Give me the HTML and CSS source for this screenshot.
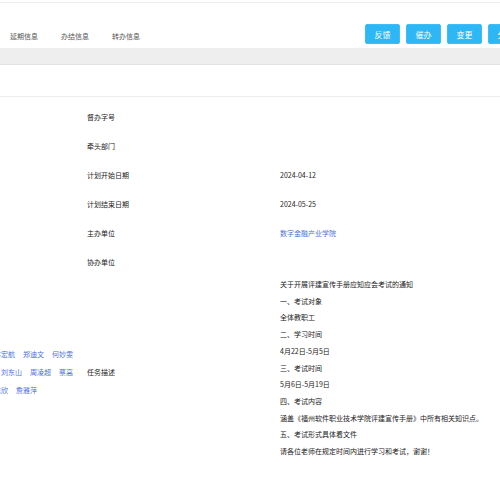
FILE: index.html
```html
<!DOCTYPE html>
<html lang="zh-CN">
<head>
    <meta charset="UTF-8">
    <meta name="viewport" content="width=device-width, initial-scale=1.0">
    <title>督办详情</title>
    <link rel="stylesheet" href="styles.css">
</head>
<body>

    <div class="topbar"></div>

    <!-- 标签与操作按钮 -->
    <div class="toolbar">
        <div class="tabs">
            <span class="tab">延期信息</span>
            <span class="tab">办结信息</span>
            <span class="tab">转办信息</span>
        </div>
        <div class="actions">
            <button type="button" class="btn">反馈</button>
            <button type="button" class="btn">催办</button>
            <button type="button" class="btn">变更</button>
            <button type="button" class="btn">分派</button>
        </div>
    </div>

    <div class="band"></div>
    <div class="spacer"></div>

    <!-- 详情表格 -->
    <div class="detail">
        <div class="cell"></div>
        <div class="cell label">督办字号</div>
        <div class="cell"></div>

        <div class="cell"></div>
        <div class="cell label">牵头部门</div>
        <div class="cell"></div>

        <div class="cell"></div>
        <div class="cell label">计划开始日期</div>
        <div class="cell">2024-04-12</div>

        <div class="cell"></div>
        <div class="cell label">计划结束日期</div>
        <div class="cell">2024-05-25</div>

        <div class="cell"></div>
        <div class="cell label">主办单位</div>
        <div class="cell link">数字金融产业学院</div>

        <div class="cell"></div>
        <div class="cell label">协办单位</div>
        <div class="cell"></div>

        <div class="cell names">
            <span>陈志强</span><span>林宏航</span><span>郑迪文</span><span>何妙雯</span>
            <span>欧阳明华</span><span>刘东山</span><span>周凌超</span><span>蔡高</span>
            <span>黄丽娟</span><span>陈欣</span><span>詹雅萍</span>
        </div>
        <div class="cell label">任务描述</div>
        <div class="cell desc">
            <p>关于开展评建宣传手册应知应会考试的通知</p>
            <p>一、考试对象</p>
            <p>全体教职工</p>
            <p>二、学习时间</p>
            <p>4月22日-5月5日</p>
            <p>三、考试时间</p>
            <p>5月6日-5月19日</p>
            <p>四、考试内容</p>
            <p>涵盖《福州软件职业技术学院评建宣传手册》中所有相关知识点。</p>
            <p>五、考试形式具体看文件</p>
            <p>请各位老师在规定时间内进行学习和考试，谢谢！</p>
        </div>
    </div>

</body>
</html>
```

FILE: styles.css
```css
body {
    font-family: "Noto Sans CJK SC", "Noto Sans", sans-serif;
    font-size: 7px;
    color: #222;
    margin: 0;
    background-color: white;
    overflow: hidden;
}

.topbar {
    height: 2px;
    border-bottom: 1px solid #ececec;
}

.toolbar {
    display: flex;
    height: 45px;
    box-sizing: border-box;
    padding-top: 21px;
    white-space: nowrap;
}

.tabs {
    display: flex;
    padding-left: 10px;
    padding-top: 2px;
}

.tab {
    width: 28px;
    margin-right: 23px;
    line-height: 20px;
    color: #555;
}

.actions {
    display: flex;
    gap: 6px;
    margin-left: 202px;
}

.btn {
    width: 35px;
    height: 20px;
    padding: 0;
    border: 1px solid #3fbdf6;
    border-radius: 2px;
    background-color: #2db7f5;
    color: white;
    font-family: inherit;
    font-size: 8px;
    flex-shrink: 0;
}

.band {
    height: 16px;
    background-color: #eeeeee;
    border-bottom: 1px solid #e2e2e2;
}

.spacer {
    height: 31px;
    border-bottom: 1px solid #ececec;
}

/* 详情表格 */
.detail {
    display: grid;
    grid-template-columns: 122px 193px 1fr;
    grid-auto-rows: minmax(29px, auto);
    margin-left: -35px;
    padding-top: 5px;
}

.cell {
    display: flex;
    align-items: center;
}

.label {
    color: #222;
}

.link {
    color: #4d72d6;
}

.names {
    flex-wrap: wrap;
    align-content: center;
    column-gap: 8px;
    width: 110px;
    line-height: 18px;
    color: #4d72d6;
}

.desc {
    display: block;
    padding-bottom: 8px;
    line-height: 16.7px;
}

.desc p {
    margin: 0;
    white-space: nowrap;
}
```
